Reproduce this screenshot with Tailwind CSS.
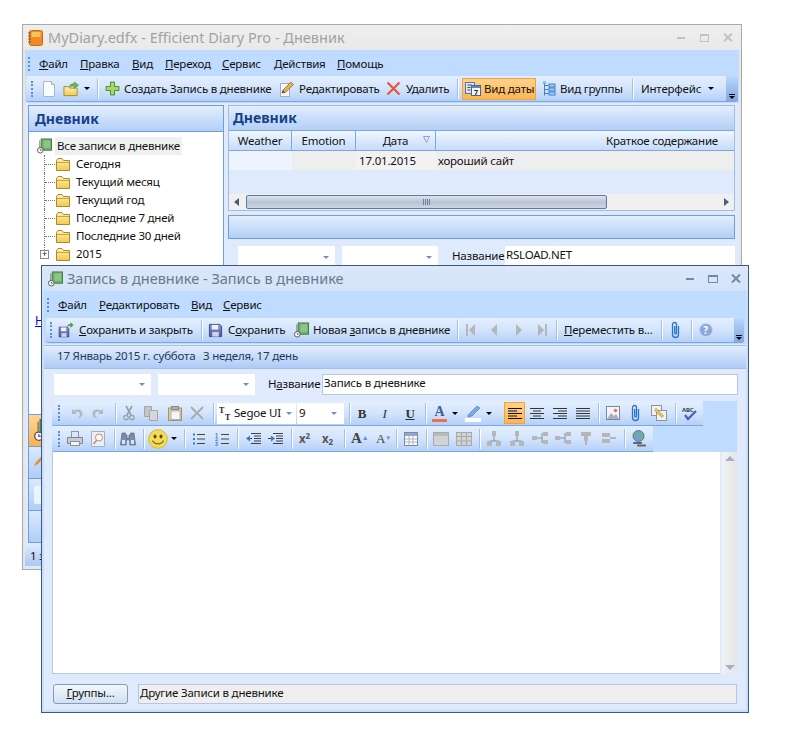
<!DOCTYPE html>
<html lang="ru">
<head>
  <meta charset="UTF-8" />
  <title>MyDiary.edfx - Efficient Diary Pro</title>
  <script src="https://cdn.jsdelivr.net/npm/@tailwindcss/browser@4"></script>
</head>
<body class="relative w-[794px] h-[745px] overflow-hidden bg-white text-[11.5px] tracking-[-0.2px] leading-none text-[#111] font-['Noto_Sans','Open_Sans',sans-serif]">

  <!-- shared icons -->
  <svg class="absolute w-0 h-0">
    <defs>
      <linearGradient id="fold" x1="0" y1="0" x2="0" y2="1"><stop offset="0" stop-color="#fff0b0"/><stop offset="1" stop-color="#f3c94e"/></linearGradient>
      <linearGradient id="disc" x1="0" y1="0" x2="0" y2="1"><stop offset="0" stop-color="#8a90c8"/><stop offset="1" stop-color="#4f5aa0"/></linearGradient>
    </defs>
    <symbol id="folder" viewBox="0 0 16 14"><path d="M1.5 3.5 3 1.5h4L8.500 3.500H14.500V13.500H1.500z" fill="url(#fold)" stroke="#a98a2c"/><path d="M2 5.500H14" stroke="#c9a43c" fill="none"/></symbol>
    <symbol id="book" viewBox="0 0 16 16"><rect x="4.500" y="0.500" width="11" height="12" fill="#6fae6a" stroke="#3f7a45"/><rect x="7" y="2" width="7" height="8" fill="#8cc585"/><path d="M3 2v10" stroke="#777"/><circle cx="3.500" cy="12.500" r="3" fill="#fff" stroke="#555"/><path d="M3.500 11v1.500H5" stroke="#333" fill="none" stroke-width=".8"/></symbol>
    <symbol id="doc" viewBox="0 0 14 16"><path d="M1.500.5H9.500L12.500 3.500V15.500H1.500z" fill="#fbfcff" stroke="#a9b6cc"/><path d="M9.500.5V3.500H12.500" fill="#dde6f4" stroke="#a9b6cc"/></symbol>
    <symbol id="open" viewBox="0 0 18 16"><path d="M1 5.500h5l1 1.500h8v8H1z" fill="url(#fold)" stroke="#a98a2c"/><path d="M7 6C7 3 10 2 12 2.500V0.500L16.500 4 12 7.500V5C10 4.500 8.500 5 7 6" fill="#67b84d" stroke="#3f8a32" stroke-width=".6"/></symbol>
    <symbol id="plus" viewBox="0 0 15 15"><path d="M5.500 1h4v4.500H14v4H9.500V14h-4V9.500H1v-4h4.500z" fill="#a6d86b" stroke="#4f8f35"/></symbol>
    <symbol id="edit" viewBox="0 0 16 16"><path d="M1.500 2.500h9v13h-9z" fill="#f6f8fc" stroke="#9fabc0"/><path d="M3 12l1-3L12 1l2.500 2.500-8 8z" fill="#e5b04a" stroke="#8a6a25" stroke-width=".7"/><path d="M3 12l1-3 2 2.200z" fill="#444"/></symbol>
    <symbol id="del" viewBox="0 0 15 15"><path d="M1.500 1.500 13.500 13.500M13.500 1.500 1.500 13.500" stroke="#e8553a" stroke-width="2.200" fill="none"/></symbol>
    <symbol id="tree" viewBox="0 0 14 16"><path d="M2.500 1.500v13M2.500 4.500h4M2.500 8.500h4M2.500 12.500h4" stroke="#3f7fcf" fill="none"/><rect x="1" y="0.500" width="3" height="2.500" fill="#7fb0ea"/><rect x="7" y="3" width="6" height="3" fill="#a8cdf5" stroke="#3f7fcf"/><rect x="7" y="7" width="6" height="3" fill="#a8cdf5" stroke="#3f7fcf"/><rect x="7" y="11" width="6" height="3" fill="#a8cdf5" stroke="#3f7fcf"/></symbol>
    <symbol id="save" viewBox="0 0 16 16"><path d="M1.500 1.500H12.500L14.500 3.500V14.500H1.500z" fill="url(#disc)" stroke="#3c4788"/><rect x="4" y="2" width="7" height="5" fill="#eef0fa"/><rect x="4.500" y="9.500" width="7" height="5" fill="#cfd3ea"/></symbol>
    <symbol id="clip" viewBox="0 0 11 18"><path d="M8.500 5v8.500a3 3 0 0 1-6 0V3.500a2 2 0 0 1 4 0V12a.9.9 0 0 1-1.800 0V5" fill="none" stroke="#2b72c8" stroke-width="1.300"/></symbol>
    <symbol id="undo" viewBox="0 0 13 13"><path d="M2 2v5h5L5.200 5.400C7 4 10 4.500 10 7.500c0 1.500-1 2.500-2.500 3.500 3.500 0 5-2 5-4.500C12.500 3 8 1 4 3.800z" fill="#b2b6bd"/></symbol>
    <symbol id="redo" viewBox="0 0 13 13"><path d="M11 2v5H6l1.800-1.600C6 4 3 4.500 3 7.500 3 9 4 10 5.500 11 2 11 .5 9 .5 6.500.5 3 5 1 9 3.800z" fill="#b2b6bd"/></symbol>
    <symbol id="cut" viewBox="0 0 12 16"><path d="M3 1l5 9M9 1 4 10" stroke="#9a9ea6" stroke-width="1.600" fill="none"/><circle cx="3" cy="12.500" r="2.200" fill="none" stroke="#9a9ea6" stroke-width="1.300"/><circle cx="9" cy="12.500" r="2.200" fill="none" stroke="#9a9ea6" stroke-width="1.300"/></symbol>
    <symbol id="copy" viewBox="0 0 14 15"><path d="M.5.5h7v10h-7z" fill="#c4c6c9" stroke="#a3a5a8"/><path d="M5.500 4.500h8v10h-8z" fill="#d6d7d9" stroke="#a3a5a8"/></symbol>
    <symbol id="paste" viewBox="0 0 14 15"><rect x=".5" y="2" width="13" height="12.500" fill="#e2cf95" stroke="#a5955f"/><rect x="3.500" y=".5" width="7" height="3" fill="#aeb1b5" stroke="#888"/><rect x="3" y="5" width="9" height="8.500" fill="#f4f6fa" stroke="#a9b1c0"/></symbol>
    <symbol id="bigx" viewBox="0 0 14 14"><path d="M1 1 13 13M13 1 1 13" stroke="#a8abb0" stroke-width="1.800" fill="none"/></symbol>
    <symbol id="left" viewBox="0 0 14 14"><path d="M0 2.500H14M0 5H9M0 7.500H14M0 10H9M0 12.500H14" stroke="#111" fill="none"/></symbol>
    <symbol id="center" viewBox="0 0 14 14"><path d="M0 2.500H14M3 5H11M0 7.500H14M3 10H11M0 12.500H14" stroke="#333" fill="none"/></symbol>
    <symbol id="right" viewBox="0 0 14 14"><path d="M0 2.500H14M5 5H14M0 7.500H14M5 10H14M0 12.500H14" stroke="#333" fill="none"/></symbol>
    <symbol id="just" viewBox="0 0 14 14"><path d="M0 2.500H14M0 5H14M0 7.500H14M0 10H14M0 12.500H14" stroke="#333" fill="none"/></symbol>
    <symbol id="pic" viewBox="0 0 14 14"><rect x=".5" y=".5" width="13" height="13" fill="#f2f4f8" stroke="#7d8796"/><circle cx="9.500" cy="4.500" r="1.800" fill="#e8795a"/><path d="M1 13l4-6 3 3 2-2 3 5z" fill="#a9b0bd"/></symbol>
    <symbol id="link" viewBox="0 0 16 16"><rect x=".5" y=".5" width="10" height="10" fill="#eef1f6" stroke="#8a94a6"/><rect x="5.500" y="5.500" width="10" height="10" fill="#eef1f6" stroke="#8a94a6"/><path d="M4 4l8 8" stroke="#c99a20" stroke-width="3" fill="none"/><path d="M4 4l8 8" stroke="#f5d35c" stroke-width="1.300" fill="none"/></symbol>
    <symbol id="print" viewBox="0 0 16 15"><rect x="4.500" y=".5" width="7" height="6" fill="#dbe8fb" stroke="#8b98ac"/><path d="M.5 6.500h15v6h-15z" fill="#c7cbd2" stroke="#808690"/><rect x="3.500" y="10.500" width="9" height="4" fill="#f3f3f3" stroke="#8b8f96"/></symbol>
    <symbol id="prev" viewBox="0 0 14 16"><path d="M.5.5h13v15H.5z" fill="#e8eefa" stroke="#9fb0cb"/><circle cx="8" cy="6.500" r="3.500" fill="#fff" stroke="#d58a4a"/><path d="M5.500 9.500l-3 3.500" stroke="#d58a4a" stroke-width="1.500"/></symbol>
    <symbol id="binoc" viewBox="0 0 16 15"><path d="M2 2h3.500v2H7v3H9V4h1.500V2H14l1.500 12H9.800V9H6.200v5H.5z" fill="#7c8ca6" stroke="#4e5a70" stroke-width=".6"/><rect x="2" y="9" width="3" height="4" fill="#dce4f1"/><rect x="11" y="9" width="3" height="4" fill="#dce4f1"/></symbol>
    <symbol id="smile" viewBox="0 0 20 20"><circle cx="10" cy="10" r="9.300" fill="#f5dc55" stroke="#d8b52e"/><ellipse cx="7" cy="7.500" rx="1.500" ry="2" fill="#5b4a20"/><ellipse cx="13" cy="7.500" rx="1.500" ry="2" fill="#5b4a20"/><path d="M4.500 11.500c2 4.500 9 4.500 11 0" stroke="#8a6a1c" stroke-width="1.200" fill="none"/></symbol>
    <symbol id="bull" viewBox="0 0 13 14"><path d="M5 2.500H13M5 7H13M5 11.500H13" stroke="#444" fill="none"/><path d="M1 1.500h2v2H1zM1 6h2v2H1zM1 10.500h2v2H1z" fill="#3f79c9"/></symbol>
    <symbol id="outd" viewBox="0 0 15 14"><path d="M5 1.500H15M8 4H15M8 6.500H15M8 9H15M5 11.500H15M1 6.500H6" stroke="#3a3f48" fill="none"/><path d="M4 3.500 0 6.500l4 3z" fill="#3f79c9"/></symbol>
    <symbol id="ind" viewBox="0 0 15 14"><path d="M5 1.500H15M8 4H15M8 6.500H15M8 9H15M5 11.500H15M0 6.500H4" stroke="#3a3f48" fill="none"/><path d="M3 3.500l4 3-4 3z" fill="#3f79c9"/></symbol>
    <symbol id="tbl" viewBox="0 0 14 14"><rect x=".5" y=".5" width="13" height="13" fill="#fff" stroke="#7f8a9c"/><rect x="1" y="1" width="12" height="3" fill="#8fa9d3"/><path d="M5 4v9M9 4v9M1 7h12M1 10h12" stroke="#a9b3c3" fill="none"/></symbol>
    <symbol id="tg1" viewBox="0 0 16 14"><rect x=".5" y=".5" width="15" height="13" fill="#d2d3d5" stroke="#a8a9ab"/><rect x="1" y="1" width="14" height="3" fill="#b9babd"/></symbol>
    <symbol id="tg2" viewBox="0 0 16 14"><rect x=".5" y=".5" width="15" height="13" fill="#d2d3d5" stroke="#a8a9ab"/><path d="M5.500 1v13M10.500 1v13M1 4.500h14M1 9h14" stroke="#a8a9ab" fill="none"/></symbol>
    <symbol id="o1" viewBox="0 0 14 15"><rect x="5" y="0" width="4" height="5" fill="#b5b6b8"/><path d="M7 5v5M2.500 10h9" stroke="#8d8e90" fill="none"/><rect x="0" y="10" width="5" height="5" fill="#b5b6b8"/><rect x="9" y="10" width="5" height="5" fill="#b5b6b8"/></symbol>
    <symbol id="o2" viewBox="0 0 16 15"><rect x="0" y="5" width="5" height="4" fill="#b5b6b8"/><path d="M5 7h5M10 2v10" stroke="#8d8e90" fill="none"/><rect x="11" y="1" width="5" height="4" fill="#b5b6b8"/><rect x="11" y="9" width="5" height="4" fill="#b5b6b8"/></symbol>
    <symbol id="o3" viewBox="0 0 14 15"><path d="M2 1h10v4H9v5H5V5H2z" fill="#b5b6b8"/><path d="M7 10v4" stroke="#8d8e90"/></symbol>
    <symbol id="o4" viewBox="0 0 16 15"><path d="M1 2h8v4h-8zM1 8h8v4h-8z" fill="#b5b6b8"/><path d="M9 7h6" stroke="#8d8e90"/></symbol>
    <symbol id="globe" viewBox="0 0 17 17"><circle cx="7.500" cy="6" r="5.500" fill="#6fa1dc" stroke="#4f78a8"/><path d="M4 2c2 0 3 2 2 3S3 6 3 8M8 4c2-1 4 0 4 2s-2 3-3 2" fill="#6fb654"/><path d="M3 13h7M7 15.500h7" stroke="#666" stroke-width="2.200" fill="none" stroke-linecap="round"/></symbol>
  </svg>

  <!-- back window -->
  <section class="absolute left-[22px] top-[24px] w-[720px] h-[546px] border border-[#a9a9a9] flex flex-col bg-[#e6e6e6]">
    <header class="h-[25px] shrink-0 flex items-center bg-gradient-to-b from-[#efefef] to-[#e9e9e9] [&>*]:shrink-0">
      <svg class="ml-[5px] w-[15px] h-[16px]" viewBox="0 0 15 16"><rect x="1.500" y=".5" width="13" height="15" rx="2" fill="#f08a24" stroke="#c86a10"/><rect x="3.500" y="2" width="9" height="5" fill="#f7c557"/><path d="M0 3h3M0 6h3M0 9h3M0 12h3" stroke="#8a5a20"/></svg>
      <span class="ml-[5px] text-[14.5px] tracking-normal text-[#a2a2a2] whitespace-nowrap">MyDiary.edfx - Efficient Diary Pro - Дневник</span>
      <span class="ml-auto w-[8px] h-[2px] mr-[15px] bg-[#c2c2c2]"></span>
      <span class="w-[9px] h-[8px] mr-[14px] border border-t-2 border-[#c2c2c2]"></span>
      <svg class="w-[10px] h-[9px] mr-[8px]" viewBox="0 0 10 9"><path d="M1 .5 9 8.500M9 .5 1 8.500" stroke="#c2c2c2" stroke-width="2"/></svg>
    </header>
    <div class="mx-[2px] mb-[2px] flex-1 flex flex-col bg-[#dfebfd]">
      <div class="h-[53px] shrink-0 bg-[#bfdbff] flex flex-col">
        <nav class="h-[26px] flex items-center pt-[2px] pl-[3px] [&>*]:shrink-0">
          <i class="w-[2px] h-[14px] border-l-2 border-dotted border-[#5b8fd6]"></i>
          <span class="ml-[9px] w-[41px]"><u>Ф</u>айл</span>
          <span class="w-[52px]"><u>П</u>равка</span>
          <span class="w-[33px]"><u>В</u>ид</span>
          <span class="w-[57px]"><u>П</u>ереход</span>
          <span class="w-[52px]"><u>С</u>ервис</span>
          <span class="w-[63px]"><u>Д</u>ействия</span>
          <span class="w-[60px]"><u>П</u>омощь</span>
        </nav>
        <div class="h-[26px] ml-px mr-[1px] flex items-center pl-[5px] rounded-[3px] border-b border-[#7ea6e0] bg-gradient-to-b from-[#e3effe] via-[#d3e4fc] to-[#b4d0f7] whitespace-nowrap [&>*]:shrink-0">
          <i class="w-[2px] h-[16px] border-l-2 border-dotted border-[#5b8fd6]"></i>
          <svg class="ml-[9px] w-[14px] h-[16px]"><use href="#doc"/></svg>
          <svg class="ml-[7px] w-[17px] h-[16px]"><use href="#open"/></svg>
          <i class="ml-[4px] border-x-[3px] border-x-transparent border-t-[3px] border-t-black"></i>
          <i class="ml-[7px] w-[2px] h-[20px] border-x border-l-[#a3bfe6] border-r-white"></i>
          <svg class="ml-[6px] w-[15px] h-[15px]"><use href="#plus"/></svg>
          <span class="ml-[4px] w-[148px]">Создать Запись в дневнике</span>
          <svg class="ml-[7px] w-[16px] h-[16px]"><use href="#edit"/></svg>
          <span class="ml-[4px] w-[80px]">Редактировать</span>
          <svg class="ml-[7px] w-[15px] h-[15px]"><use href="#del"/></svg>
          <span class="ml-[5px] w-[44px]">Удалить</span>
          <i class="ml-[7px] w-[2px] h-[20px] border-x border-l-[#a3bfe6] border-r-white"></i>
          <div class="ml-[3px] w-[74px] h-[22px] flex items-center border border-[#f0a43e] bg-gradient-to-b from-[#ffd28a] to-[#fdb552] [&>*]:shrink-0">
            <svg class="ml-[2px] w-[16px] h-[14px]" viewBox="0 0 16 14"><rect x=".5" y=".5" width="9" height="11" fill="#dce6f6" stroke="#5576a8"/><rect x="6.500" y="3.500" width="9" height="10" fill="#f8f8f8" stroke="#47689c"/><rect x="7" y="4" width="8" height="2" fill="#5f86c0"/><text x="9" y="12.500" font-size="7" font-weight="700" fill="#222">7</text><path d="M2.500 3h4M2.500 5.500h3M2.500 8h3" stroke="#445"/></svg>
            <span class="ml-[3px]">Вид даты</span>
          </div>
          <svg class="ml-[6px] w-[14px] h-[16px]"><use href="#tree"/></svg>
          <span class="ml-[4px] w-[63px]">Вид группы</span>
          <i class="ml-[9px] w-[2px] h-[20px] border-x border-l-[#a3bfe6] border-r-white"></i>
          <span class="ml-[7px] w-[62px]">Интерфейс</span>
          <i class="ml-[5px] border-x-[3px] border-x-transparent border-t-[3px] border-t-black"></i>
          <div class="ml-auto w-[12px] h-[26px] flex flex-col items-center justify-end pb-[3px] rounded-r-[3px] bg-gradient-to-b from-[#bcd6fa] to-[#7ea6e0]">
            <i class="w-[6px] h-px bg-black mb-px"></i>
            <i class="border-x-[3px] border-x-transparent border-t-[3px] border-t-black"></i>
          </div>
        </div>
      </div>

      <div class="flex-1 flex mt-[2px] ml-[3px] pb-[3px]">
        <!-- tree pane -->
        <aside class="w-[196px] shrink-0 border border-[#6f9fd8] flex flex-col">
          <h2 class="h-[26px] shrink-0 pl-[6px] flex items-center text-[14px] tracking-normal font-bold text-[#15428b] border-b border-[#6f9fd8] bg-gradient-to-b from-[#e3eefe] to-[#b3cff6]">Дневник</h2>
          <div class="flex-1 bg-white pt-[5px] relative">
            <div class="h-[18px] flex items-center pl-[8px]">
              <svg class="w-[15px] h-[16px]"><use href="#book"/></svg>
              <span class="ml-[3px] px-[2px] w-[127px] h-[18px] flex items-center bg-[#f0f0f0] whitespace-nowrap">Все записи в дневнике</span>
            </div>
            <ul class="whitespace-nowrap [&>li]:h-[18px] [&>li]:flex [&>li]:items-center [&>li]:relative [&>li]:pl-[26px]">
              <li><i class="absolute left-[15px] top-0 bottom-0 border-l border-dotted border-[#777]"></i><i class="absolute left-[16px] w-[10px] border-t border-dotted border-[#777]"></i><svg class="w-[16px] h-[14px]"><use href="#folder"/></svg><span class="ml-[5px]">Сегодня</span></li>
              <li><i class="absolute left-[15px] top-0 bottom-0 border-l border-dotted border-[#777]"></i><i class="absolute left-[16px] w-[10px] border-t border-dotted border-[#777]"></i><svg class="w-[16px] h-[14px]"><use href="#folder"/></svg><span class="ml-[5px]">Текущий месяц</span></li>
              <li><i class="absolute left-[15px] top-0 bottom-0 border-l border-dotted border-[#777]"></i><i class="absolute left-[16px] w-[10px] border-t border-dotted border-[#777]"></i><svg class="w-[16px] h-[14px]"><use href="#folder"/></svg><span class="ml-[5px]">Текущий год</span></li>
              <li><i class="absolute left-[15px] top-0 bottom-0 border-l border-dotted border-[#777]"></i><i class="absolute left-[16px] w-[10px] border-t border-dotted border-[#777]"></i><svg class="w-[16px] h-[14px]"><use href="#folder"/></svg><span class="ml-[5px]">Последние 7 дней</span></li>
              <li><i class="absolute left-[15px] top-0 bottom-0 border-l border-dotted border-[#777]"></i><i class="absolute left-[16px] w-[10px] border-t border-dotted border-[#777]"></i><svg class="w-[16px] h-[14px]"><use href="#folder"/></svg><span class="ml-[5px]">Последние 30 дней</span></li>
              <li><i class="absolute left-[15px] top-0 h-[5px] border-l border-dotted border-[#777]"></i><i class="absolute left-[11px] w-[9px] h-[9px] border border-[#8a8a8a] bg-white text-center text-[9px] leading-[6px] not-italic">+</i><svg class="w-[16px] h-[14px]"><use href="#folder"/></svg><span class="ml-[5px]">2015</span></li>
            </ul>
            <a class="block mt-[52px] ml-[6px] text-[12px] text-[#0000ff] underline">Н</a>
          </div>
          <div class="h-[128px] shrink-0 flex flex-col [&>div]:relative [&>div]:overflow-hidden">
            <div class="h-[32px] border-t border-[#6f9fd8] bg-gradient-to-b from-[#ffd591] to-[#fbb24e]"><svg class="absolute left-[5px] top-[4px] w-[22px] h-[22px]"><use href="#book"/></svg></div>
            <div class="h-[32px] border-t border-[#6f9fd8] bg-gradient-to-b from-[#dbe9fd] to-[#b0cdf6]"><svg class="absolute left-[4px] top-[6px] w-[14px] h-[14px]" viewBox="0 0 14 14"><path d="M1 13l2-4 8-8 2 2-8 8z" fill="#e5913a"/></svg></div>
            <div class="h-[32px] border-t border-[#6f9fd8] bg-gradient-to-b from-[#dbe9fd] to-[#b0cdf6]"><i class="absolute left-[5px] top-[7px] w-[10px] h-[18px] rounded-[2px] bg-[#e9f6ff]"></i></div>
            <div class="h-[32px] border-t border-[#6f9fd8] bg-gradient-to-b from-[#dbe9fd] to-[#b0cdf6]"></div>
          </div>
        </aside>

        <!-- list pane -->
        <main class="ml-[4px] w-[507px] shrink-0 flex flex-col">
          <div class="h-[106px] shrink-0 border border-[#9fbde6] flex flex-col">
            <h2 class="h-[24px] shrink-0 pl-[4px] flex items-center text-[14px] tracking-normal font-bold text-[#15428b] bg-gradient-to-b from-[#e3eefe] to-[#b3cff6]">Дневник</h2>
            <div class="h-[21px] shrink-0 flex items-center text-center border-y border-[#7ea6e0] bg-gradient-to-b from-[#f0f6ff] to-[#c6dcf9]">
              <span class="w-[63px] h-full flex items-center justify-center border-r border-[#7ea6e0]">Weather</span>
              <span class="w-[64px] h-full flex items-center justify-center border-r border-[#7ea6e0]">Emotion</span>
              <span class="w-[80px] h-full relative flex items-center justify-center border-r border-[#7ea6e0]">Дата<svg class="absolute right-[5px] top-[5px] w-[7px] h-[7px]" viewBox="0 0 7 7"><path d="M.5.5h6L3.500 6.500z" fill="none" stroke="#8ea6c8"/></svg></span>
              <span class="flex-1 text-right pr-[16px]">Краткое содержание</span>
            </div>
            <div class="h-[19px] shrink-0 flex items-center">
              <span class="w-[63px] h-full bg-[#eef5ff]"></span>
              <span class="w-[64px] h-full bg-[#eeeeee]"></span>
              <span class="w-[80px] h-full flex items-center pl-[3px] bg-[#f2f2f2]">17.01.2015</span>
              <span class="flex-1 h-full flex items-center pl-[2px] bg-[#eeeeee]">хороший сайт</span>
            </div>
            <div class="flex-1"></div>
            <div class="h-[16px] shrink-0 flex items-center bg-[#f0f0f0]">
              <i class="ml-[5px] border-y-[4px] border-y-transparent border-r-[5px] border-r-[#4b5d78]"></i>
              <div class="ml-[7px] w-[361px] h-[14px] flex items-center justify-center gap-px rounded-[2px] border border-[#5a78a8] bg-gradient-to-b from-[#dfe4ec] via-[#b9c4d6] to-[#cdd5e2]">
                <i class="w-px h-[6px] bg-[#6f7f98]"></i><i class="w-px h-[6px] bg-[#6f7f98]"></i><i class="w-px h-[6px] bg-[#6f7f98]"></i><i class="w-px h-[6px] bg-[#6f7f98]"></i>
              </div>
              <i class="ml-auto mr-[5px] border-y-[4px] border-y-transparent border-l-[5px] border-l-[#4b5d78]"></i>
            </div>
          </div>
          <div class="mt-[4px] h-[24px] shrink-0 border border-[#6f9fd8] bg-gradient-to-b from-[#e3eefe] to-[#b3cff6]"></div>
          <div class="mt-[7px] h-[22px] flex shrink-0">
            <div class="ml-[10px] w-[97px] bg-white flex items-center justify-end pr-[6px]"><i class="border-x-[3px] border-x-transparent border-t-[3px] border-t-[#6f8fc0]"></i></div>
            <div class="ml-[7px] w-[96px] bg-white flex items-center justify-end pr-[6px]"><i class="border-x-[3px] border-x-transparent border-t-[3px] border-t-[#6f8fc0]"></i></div>
            <span class="ml-[14px] w-[53px] pb-[2px] flex items-center">Название</span>
            <div class="flex-1 bg-white flex items-center pl-px pb-[4px]">RSLOAD.NET</div>
          </div>
        </main>
      </div>
      <div class="h-[20px] shrink-0 flex items-center pl-[5px] mb-[1px] bg-gradient-to-b from-[#d9e7fd] to-[#a9c8f3]">1 з</div>
    </div>
  </section>

  <!-- front window -->
  <section class="absolute left-[41px] top-[265px] w-[708px] h-[448px] border border-[#3a5a85] flex flex-col bg-[#dfebfd]">
    <header class="h-[25px] shrink-0 flex items-center bg-gradient-to-b from-[#dbe7fa] to-[#d3e4fa] [&>*]:shrink-0">
      <svg class="ml-[6px] w-[15px] h-[16px]"><use href="#book"/></svg>
      <span class="ml-[4px] text-[14.5px] tracking-normal text-[#6b7a8c] whitespace-nowrap">Запись в дневнике - Запись в дневнике</span>
      <span class="ml-auto w-[8px] h-[2px] mr-[14px] bg-[#6f8aa8]"></span>
      <span class="w-[10px] h-[8px] mr-[13px] border border-t-2 border-[#6f8aa8]"></span>
      <svg class="w-[10px] h-[9px] mr-[7px]" viewBox="0 0 10 9"><path d="M1 .5 9 8.500M9 .5 1 8.500" stroke="#6f8aa8" stroke-width="2"/></svg>
    </header>
    <div class="flex-1 flex flex-col border-x-2 border-b-2 border-[#c9def8]">
      <div class="h-[53px] shrink-0 bg-[#bfdbff]">
        <nav class="h-[27px] flex items-center pl-[3px] [&>*]:shrink-0">
          <i class="w-[2px] h-[14px] border-l-2 border-dotted border-[#5b8fd6]"></i>
          <span class="ml-[9px] w-[41px]"><u>Ф</u>айл</span>
          <span class="w-[92px]"><u>Р</u>едактировать</span>
          <span class="w-[32px]"><u>В</u>ид</span>
          <span class="w-[50px]"><u>С</u>ервис</span>
        </nav>
        <div class="h-[25px] mx-[2px] flex items-center pl-[4px] rounded-[3px] border-b border-[#7ea6e0] bg-gradient-to-b from-[#e3effe] via-[#d3e4fc] to-[#b4d0f7] whitespace-nowrap [&>*]:shrink-0">
          <i class="w-[2px] h-[16px] border-l-2 border-dotted border-[#5b8fd6]"></i>
          <svg class="ml-[6px] w-[16px] h-[16px]" viewBox="0 0 16 16"><use href="#save" width="12" height="12" y="4"/><path d="M9 5C9 3 11 2 12.500 2V0l3 3-3 3V4C11 4 10 4 9 5" fill="#4aa03c"/></svg>
          <span class="ml-[5px] w-[115px]"><u>С</u>охранить и закрыть</span>
          <i class="ml-[7px] w-[2px] h-[20px] border-x border-l-[#a3bfe6] border-r-white"></i>
          <svg class="ml-[5px] w-[15px] h-[15px]"><use href="#save"/></svg>
          <span class="ml-[5px] w-[58px]">С<u>о</u>хранить</span>
          <svg class="ml-[8px] w-[15px] h-[16px]"><use href="#book"/></svg>
          <span class="ml-[4px] w-[137px]">Новая <u>з</u>апись в дневнике</span>
          <i class="ml-[7px] w-[2px] h-[20px] border-x border-l-[#a3bfe6] border-r-white"></i>
          <svg class="ml-[7px] w-[9px] h-[12px]" viewBox="0 0 9 12"><path d="M0 0h2v12H0zM9 0v12L3 6z" fill="#b4b6b8"/></svg>
          <svg class="ml-[15px] w-[8px] h-[12px]" viewBox="0 0 8 12"><path d="M7 0v12L1 6z" fill="#b4b6b8"/></svg>
          <svg class="ml-[17px] w-[8px] h-[12px]" viewBox="0 0 8 12"><path d="M1 0v12l6-6z" fill="#b4b6b8"/></svg>
          <svg class="ml-[15px] w-[9px] h-[12px]" viewBox="0 0 9 12"><path d="M0 0v12l6-6zM7 0h2v12H7z" fill="#b4b6b8"/></svg>
          <i class="ml-[9px] w-[2px] h-[20px] border-x border-l-[#a3bfe6] border-r-white"></i>
          <span class="ml-[6px] w-[90px]"><u>П</u>ереместить в...</span>
          <i class="ml-[7px] w-[2px] h-[20px] border-x border-l-[#a3bfe6] border-r-white"></i>
          <svg class="ml-[7px] w-[11px] h-[18px]"><use href="#clip"/></svg>
          <i class="ml-[10px] w-[2px] h-[20px] border-x border-l-[#a3bfe6] border-r-white"></i>
          <svg class="ml-[6px] w-[14px] h-[14px]" viewBox="0 0 14 14"><circle cx="7" cy="7" r="6.500" fill="#8aa8dc" stroke="#c5d3ea"/><text x="4.200" y="10.800" font-size="10" font-weight="700" fill="#fff">?</text></svg>
          <div class="ml-auto w-[10px] h-[25px] flex flex-col items-center justify-end pb-[3px] rounded-r-[3px] bg-gradient-to-b from-[#bcd6fa] to-[#7ea6e0]">
            <i class="w-[6px] h-px bg-black mb-px"></i>
            <i class="border-x-[3px] border-x-transparent border-t-[3px] border-t-black"></i>
          </div>
        </div>
      </div>

      <div class="h-[24px] mt-px shrink-0 flex items-center pl-[13px] pb-[3px] text-[#1e395b] border-y border-[#9fc0ea] bg-gradient-to-b from-[#e2edfd] to-[#aecbf4] whitespace-nowrap">
        <span class="w-[146px]">17 Январь 2015 г. суббота</span><span>3 неделя, 17 день</span>
      </div>

      <div class="mt-[5px] h-[21px] shrink-0 flex">
        <div class="ml-[10px] w-[97px] bg-white flex items-center justify-end pr-[6px]"><i class="border-x-[3px] border-x-transparent border-t-[3px] border-t-[#6f8fc0]"></i></div>
        <div class="ml-[7px] w-[97px] bg-white flex items-center justify-end pr-[6px]"><i class="border-x-[3px] border-x-transparent border-t-[3px] border-t-[#6f8fc0]"></i></div>
        <span class="ml-[13px] w-[54px] pb-[2px] flex items-center">Н<u>а</u>звание</span>
        <div class="w-[416px] bg-white border border-[#b4c8e4] flex items-center pl-px pb-[4px]">Запись в дневнике</div>
      </div>

      <!-- format toolbars -->
      <div class="mt-[6px] ml-[8px] w-[685px] h-[51px] shrink-0 bg-[#bfdbff]">
        <div class="w-[651px] h-[25px] flex items-center pl-[6px] rounded-l-[3px] border-b border-[#7ea6e0] bg-gradient-to-b from-[#e3effe] via-[#d3e4fc] to-[#b4d0f7] [&>*]:shrink-0">
          <i class="w-[2px] h-[16px] border-l-2 border-dotted border-[#5b8fd6]"></i>
          <svg class="ml-[10px] w-[13px] h-[13px]"><use href="#undo"/></svg>
          <svg class="ml-[9px] w-[13px] h-[13px]"><use href="#redo"/></svg>
          <i class="ml-[10px] w-[2px] h-[20px] border-x border-l-[#a3bfe6] border-r-white"></i>
          <svg class="ml-[6px] w-[12px] h-[16px]"><use href="#cut"/></svg>
          <svg class="ml-[9px] w-[14px] h-[15px]"><use href="#copy"/></svg>
          <svg class="ml-[10px] w-[14px] h-[15px]"><use href="#paste"/></svg>
          <svg class="ml-[8px] w-[14px] h-[14px]"><use href="#bigx"/></svg>
          <i class="ml-[9px] w-[2px] h-[20px] border-x border-l-[#a3bfe6] border-r-white"></i>
          <div class="ml-[2px] w-[79px] h-[21px] flex items-center bg-white pl-[2px] [&>*]:shrink-0">
            <svg class="w-[14px] h-[14px]" viewBox="0 0 14 14"><text x="0" y="6.500" font-size="8" font-weight="700" font-family="Liberation Serif" fill="#222">T</text><text x="6" y="13.500" font-size="8" font-weight="700" font-family="Liberation Serif" fill="#222">T</text></svg>
            <span class="ml-[1px] w-[49px] whitespace-nowrap">Segoe UI</span>
            <i class="ml-[3px] border-x-[3px] border-x-transparent border-t-[3px] border-t-[#6f8fc0]"></i>
          </div>
          <div class="ml-px w-[47px] h-[21px] flex items-center justify-between bg-white pl-[2px] pr-[7px]">9<i class="border-x-[3px] border-x-transparent border-t-[3px] border-t-[#6f8fc0]"></i></div>
          <i class="ml-[5px] w-[2px] h-[20px] border-x border-l-[#a3bfe6] border-r-white"></i>
          <b class="ml-[5px] w-[12px] text-center text-[13px] font-['Liberation_Serif',serif] text-[#333]">B</b>
          <i class="ml-[12px] w-[9px] text-center text-[13px] font-['Liberation_Serif',serif] text-[#333]">I</i>
          <u class="ml-[15px] w-[12px] text-center text-[13px] font-bold font-['Liberation_Serif',serif] text-[#333]">U</u>
          <i class="ml-[9px] w-[2px] h-[20px] border-x border-l-[#a3bfe6] border-r-white"></i>
          <div class="ml-[5px] w-[15px] h-[17px] flex flex-col items-center font-['Liberation_Serif',serif] font-bold text-[14px] not-italic text-[#3f5f95]">A<i class="mt-auto w-full h-[4px] bg-[#f0704a]"></i></div>
          <i class="ml-[5px] border-x-[3px] border-x-transparent border-t-[3px] border-t-black"></i>
          <svg class="ml-[7px] w-[17px] h-[17px]" viewBox="0 0 17 17"><path d="M3 10 12 1l3 2-8 8-4 1z" fill="#7fa7e0" stroke="#4a72ad" stroke-width=".6"/><rect x="0" y="13" width="16" height="4" fill="#fff"/></svg>
          <i class="ml-[4px] border-x-[3px] border-x-transparent border-t-[3px] border-t-black"></i>
          <div class="ml-[12px] w-[21px] h-[22px] flex items-center justify-center border border-[#f0a43e] bg-gradient-to-b from-[#ffd28a] to-[#fdb552]"><svg class="w-[14px] h-[14px]"><use href="#left"/></svg></div>
          <svg class="ml-[5px] w-[14px] h-[14px]"><use href="#center"/></svg>
          <svg class="ml-[9px] w-[14px] h-[14px]"><use href="#right"/></svg>
          <svg class="ml-[9px] w-[14px] h-[14px]"><use href="#just"/></svg>
          <i class="ml-[8px] w-[2px] h-[20px] border-x border-l-[#a3bfe6] border-r-white"></i>
          <svg class="ml-[6px] w-[14px] h-[14px]"><use href="#pic"/></svg>
          <svg class="ml-[10px] w-[11px] h-[18px]"><use href="#clip"/></svg>
          <svg class="ml-[10px] w-[16px] h-[16px]"><use href="#link"/></svg>
          <i class="ml-[8px] w-[2px] h-[20px] border-x border-l-[#a3bfe6] border-r-white"></i>
          <svg class="ml-[5px] w-[16px] h-[15px]" viewBox="0 0 16 15"><text x="0" y="5.500" font-size="6" font-weight="700" fill="#444">ABC</text><path d="M3 9l3 4 8-8" stroke="#3f66b5" stroke-width="2.200" fill="none"/></svg>
        </div>
        <div class="w-[601px] h-[26px] flex items-center pl-[6px] rounded-l-[3px] border-b border-[#7ea6e0] bg-gradient-to-b from-[#e3effe] via-[#d3e4fc] to-[#b4d0f7] [&>*]:shrink-0">
          <i class="w-[2px] h-[16px] border-l-2 border-dotted border-[#5b8fd6]"></i>
          <svg class="ml-[7px] w-[16px] h-[15px]"><use href="#print"/></svg>
          <svg class="ml-[8px] w-[14px] h-[16px]"><use href="#prev"/></svg>
          <i class="ml-[9px] w-[2px] h-[20px] border-x border-l-[#a3bfe6] border-r-white"></i>
          <svg class="ml-[4px] w-[16px] h-[15px]"><use href="#binoc"/></svg>
          <i class="ml-[7px] w-[2px] h-[20px] border-x border-l-[#a3bfe6] border-r-white"></i>
          <svg class="ml-[3px] w-[20px] h-[20px]"><use href="#smile"/></svg>
          <i class="ml-[3px] border-x-[3px] border-x-transparent border-t-[3px] border-t-black"></i>
          <i class="ml-[7px] w-[2px] h-[20px] border-x border-l-[#a3bfe6] border-r-white"></i>
          <svg class="ml-[6px] w-[13px] h-[14px]"><use href="#bull"/></svg>
          <svg class="ml-[10px] w-[14px] h-[14px]" viewBox="0 0 14 14"><path d="M6 2.500H14M6 7H14M6 11.500H14" stroke="#444" fill="none"/><text x="0" y="4.500" font-size="5" font-weight="700" fill="#3f79c9">1</text><text x="0" y="9" font-size="5" font-weight="700" fill="#3f79c9">2</text><text x="0" y="13.500" font-size="5" font-weight="700" fill="#3f79c9">3</text></svg>
          <i class="ml-[8px] w-[2px] h-[20px] border-x border-l-[#a3bfe6] border-r-white"></i>
          <svg class="ml-[7px] w-[15px] h-[14px]"><use href="#outd"/></svg>
          <svg class="ml-[7px] w-[15px] h-[14px]"><use href="#ind"/></svg>
          <i class="ml-[8px] w-[2px] h-[20px] border-x border-l-[#a3bfe6] border-r-white"></i>
          <span class="ml-[6px] w-[13px] font-bold text-[#555] leading-none">x<sup class="text-[8px]">2</sup></span>
          <span class="ml-[10px] w-[13px] font-bold text-[#555] leading-none">x<sub class="text-[8px]">2</sub></span>
          <i class="ml-[9px] w-[2px] h-[20px] border-x border-l-[#a3bfe6] border-r-white"></i>
          <span class="ml-[5px] w-[16px] font-bold text-[15px] font-['Liberation_Serif',serif] text-[#444]">A<sup class="text-[7px] text-[#6f8fc0]">▲</sup></span>
          <span class="ml-[9px] w-[12px] text-[13px] font-['Liberation_Serif',serif] text-[#444]">A<sup class="text-[6px] text-[#6f8fc0]">▼</sup></span>
          <i class="ml-[8px] w-[2px] h-[20px] border-x border-l-[#a3bfe6] border-r-white"></i>
          <svg class="ml-[6px] w-[14px] h-[14px]"><use href="#tbl"/></svg>
          <i class="ml-[8px] w-[2px] h-[20px] border-x border-l-[#a3bfe6] border-r-white"></i>
          <svg class="ml-[5px] w-[16px] h-[14px]"><use href="#tg1"/></svg>
          <svg class="ml-[7px] w-[16px] h-[14px]"><use href="#tg2"/></svg>
          <i class="ml-[7px] w-[2px] h-[20px] border-x border-l-[#a3bfe6] border-r-white"></i>
          <svg class="ml-[6px] w-[14px] h-[15px]"><use href="#o1"/></svg>
          <svg class="ml-[9px] w-[14px] h-[15px]"><use href="#o1"/></svg>
          <svg class="ml-[8px] w-[16px] h-[15px]"><use href="#o2"/></svg>
          <svg class="ml-[7px] w-[16px] h-[15px]"><use href="#o2"/></svg>
          <svg class="ml-[8px] w-[14px] h-[15px]"><use href="#o3"/></svg>
          <svg class="ml-[8px] w-[16px] h-[15px]"><use href="#o4"/></svg>
          <i class="ml-[7px] w-[2px] h-[20px] border-x border-l-[#a3bfe6] border-r-white"></i>
          <svg class="ml-[5px] w-[17px] h-[17px]"><use href="#globe"/></svg>
        </div>
      </div>

      <!-- editor -->
      <div class="ml-[8px] w-[685px] h-[222px] shrink-0 flex">
        <div class="w-[668px] bg-white border-l border-b border-[#b4c8e4]"></div>
        <div class="ml-[2px] flex-1 flex flex-col items-center justify-between py-[4px] bg-gradient-to-r from-[#f2f2f2] to-[#e6e6e6]">
          <i class="border-x-[5px] border-x-transparent border-b-[5px] border-b-[#a3aed0]"></i>
          <i class="border-x-[5px] border-x-transparent border-t-[5px] border-t-[#a3aed0]"></i>
        </div>
      </div>

      <div class="mt-[10px] ml-[9px] h-[20px] shrink-0 flex">
        <button class="w-[75px] pb-[3px] rounded-[3px] border border-[#7f9db9] bg-gradient-to-b from-[#f2f6fc] to-[#d3e0f2] text-center"><u>Г</u>руппы...</button>
        <div class="ml-[10px] w-[599px] flex items-center pl-px pb-[3px] border border-[#b4c8e4] bg-[#eeeeee]">Другие Записи в дневнике</div>
      </div>
    </div>
  </section>
</body>
</html>
